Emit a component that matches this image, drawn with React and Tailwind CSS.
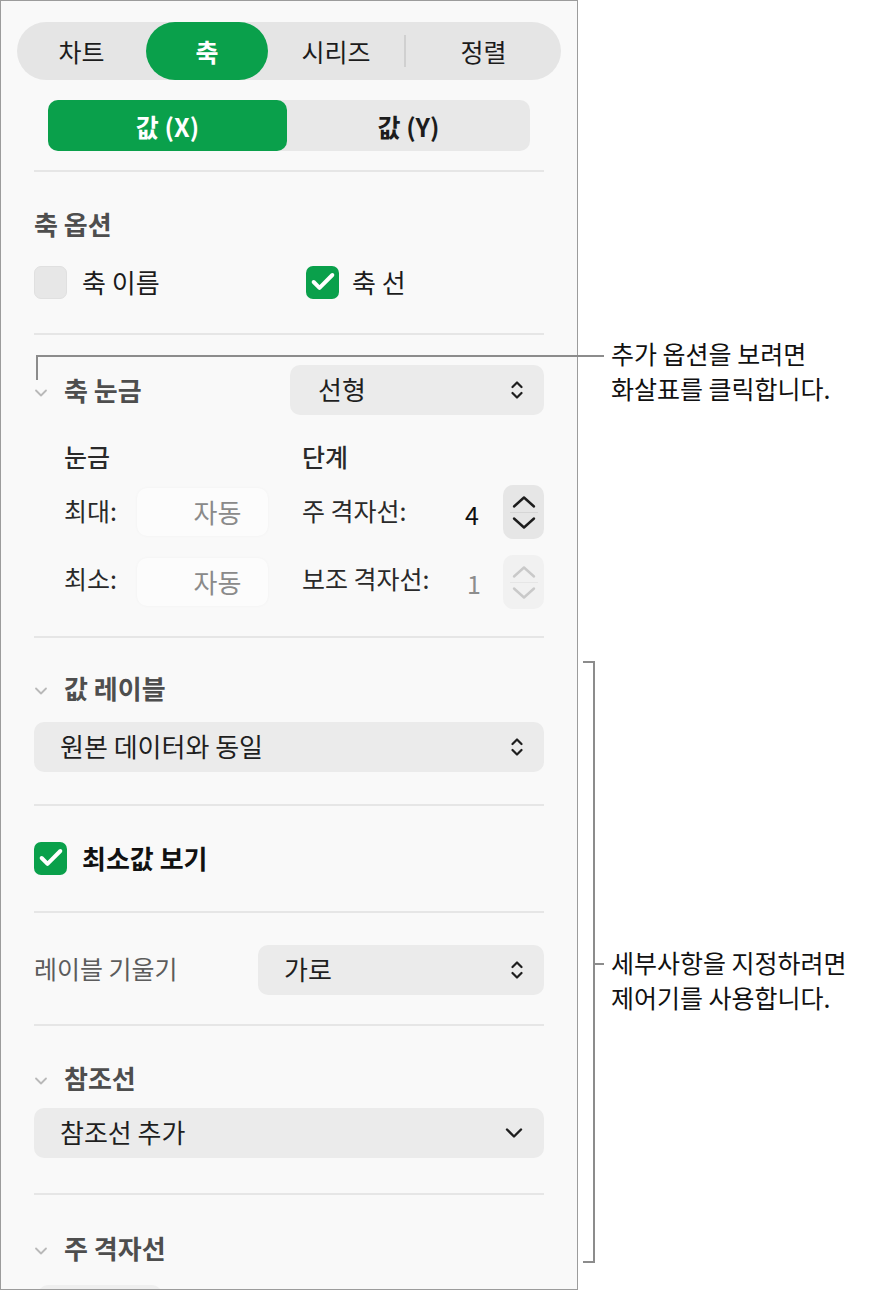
import { Check } from 'lucide-react'

const GREEN = 'bg-[#0aa04b]'

function UpDown({ className = '' }) {
  return (
    <svg width="12" height="20" viewBox="0 0 12 20" className={className} fill="none" stroke="currentColor" strokeWidth="2.2" strokeLinecap="round" strokeLinejoin="round">
      <path d="M1.5 7 L6 2.5 L10.5 7" />
      <path d="M1.5 13 L6 17.5 L10.5 13" />
    </svg>
  )
}

function Disclosure() {
  return (
    <svg width="14" height="10" viewBox="0 0 14 10" fill="none" stroke="#b9b9b9" strokeWidth="1.8" strokeLinecap="round" strokeLinejoin="round">
      <path d="M2 2.5 L7 7.5 L12 2.5" />
    </svg>
  )
}

function Select({ label, icon = 'updown', className = '' }) {
  return (
    <div className={`flex items-center justify-between h-[50px] rounded-[10px] bg-[#ebebeb] pl-[26px] pr-[21px] text-[26px] leading-[36px] text-[#1f1f1f] ${className}`}>
      <span className="pb-[2px]">{label}</span>
      {icon === 'updown' ? (
        <UpDown className="text-[#1f1f1f]" />
      ) : (
        <svg width="18" height="12" viewBox="0 0 18 12" fill="none" stroke="#1f1f1f" strokeWidth="2.4" strokeLinecap="round" strokeLinejoin="round">
          <path d="M2 2.5 L9 9.5 L16 2.5" />
        </svg>
      )}
    </div>
  )
}

function Divider() {
  return <div className="h-[2px] bg-[#e6e6e6]" />
}

function CheckBox({ checked }) {
  return checked ? (
    <div className={`w-[33px] h-[33px] shrink-0 rounded-[7px] ${GREEN} flex items-center justify-center`}>
      <Check size={28} strokeWidth={3.4} className="text-white" />
    </div>
  ) : (
    <div className="w-[33px] h-[33px] shrink-0 rounded-[7px] bg-[#e7e7e7] border border-[#e0e0e0]" />
  )
}

function SectionHead({ title }) {
  return (
    <div className="flex items-center h-[40px]">
      <div className="w-[30px] flex items-center pt-[6px]">
        <Disclosure />
      </div>
      <span className="text-[26px] leading-[36px] font-bold text-[#4e4e4e]">{title}</span>
    </div>
  )
}

function Stepper({ disabled }) {
  const c = disabled ? 'text-[#c9c9c9]' : 'text-[#1c1c1c]'
  return (
    <div className={`w-[41px] h-[54px] rounded-[10px] flex flex-col items-center justify-center ${disabled ? 'bg-[#f1f1f1]' : 'bg-[#e6e6e6]'}`}>
      <svg width="26" height="14" viewBox="0 0 26 14" fill="none" stroke="currentColor" strokeWidth="2.4" strokeLinecap="round" strokeLinejoin="round" className={c}>
        <path d="M3 11.5 L13 2.5 L23 11.5" />
      </svg>
      <div className={`w-[28px] h-[1px] my-[3px] ${disabled ? 'bg-[#e6e6e6]' : 'bg-[#d6d6d6]'}`} />
      <svg width="26" height="14" viewBox="0 0 26 14" fill="none" stroke="currentColor" strokeWidth="2.4" strokeLinecap="round" strokeLinejoin="round" className={c}>
        <path d="M3 2.5 L13 11.5 L23 2.5" />
      </svg>
    </div>
  )
}

function AutoField() {
  return (
    <div className="w-[131px] h-[48px] rounded-[10px] bg-[#fcfcfc] shadow-[0_0_3px_rgba(0,0,0,0.04)] flex items-center justify-center pl-[30px] text-[26px] text-[#8a8a8a]">
      자동
    </div>
  )
}

export default function App() {
  return (
    <div className="relative w-[870px] h-[1292px] bg-white font-['Noto_Sans_CJK_KR','Noto_Sans',sans-serif] overflow-hidden">
      {/* Inspector panel */}
      <div className="w-[578px] h-[1290px] border border-[#9c9c9c] bg-[#f9f9f9] overflow-hidden">
        {/* Top tabs */}
        <div className="mx-[16px] mt-[21px] h-[58px] rounded-full bg-[#e5e5e5] flex items-center text-[25px] leading-[36px] text-[#1c1c1c]">
          <div className="w-[129px] text-center">차트</div>
          <div className={`w-[122px] h-full rounded-full ${GREEN} text-white font-bold flex items-center justify-center`}>축</div>
          <div className="w-[136px] text-center">시리즈</div>
          <div className="w-[2px] h-[32px] bg-[#d0d0d0]" />
          <div className="flex-1 text-center">정렬</div>
        </div>

        {/* Axis switch */}
        <div className="mx-[47px] mt-[20px] h-[51px] rounded-[10px] bg-[#e8e8e8] flex items-center text-[25px] leading-[36px] font-semibold">
          <div className={`w-[239px] h-full rounded-[10px] ${GREEN} text-white flex items-center justify-center`}>값 (X)</div>
          <div className="flex-1 text-center text-[#1c1c1c]">값 (Y)</div>
        </div>

        <div className="px-[33px]">
          <div className="mt-[19px]"><Divider /></div>

          {/* Axis options */}
          <div className="mt-[34px] text-[26px] font-bold text-[#4e4e4e] leading-[36px]">축 옵션</div>
          <div className="mt-[23px] flex items-center h-[34px] text-[26px] leading-[36px] text-[#1c1c1c]">
            <div className="w-[272px] flex items-center gap-[15px]">
              <CheckBox />
              <span>축 이름</span>
            </div>
            <div className="flex items-center gap-[13px]">
              <CheckBox checked />
              <span>축 선</span>
            </div>
          </div>

          <div className="mt-[34px]"><Divider /></div>

          {/* Axis scale */}
          <div className="mt-[30px] flex items-center">
            <div className="w-[256px]"><SectionHead title="축 눈금" /></div>
            <Select label="선형" className="flex-1 pl-[28px]" />
          </div>

          <div className="mt-[26px] pl-[30px] flex text-[25px] font-medium text-[#2a2a2a] leading-[30px]">
            <div className="w-[238px]">눈금</div>
            <div>단계</div>
          </div>

          <div className="mt-[14px] pl-[30px] flex items-center text-[25px] leading-[36px] text-[#2a2a2a]">
            <div className="w-[73px] pb-[4px]">최대:</div>
            <AutoField />
            <div className="ml-[34px] flex-1 pb-[4px]">주 격자선:</div>
            <div className="w-[16px] text-[25px] text-[#111] pt-[4px]">4</div>
            <div className="ml-[22px]"><Stepper /></div>
          </div>

          <div className="mt-[16px] pl-[30px] flex items-center text-[25px] leading-[36px] text-[#2a2a2a]">
            <div className="w-[73px] pb-[8px]">최소:</div>
            <AutoField />
            <div className="ml-[34px] flex-1 pb-[8px]">보조 격자선:</div>
            <div className="w-[14px] text-[25px] text-[#8d8d8d] pt-[2px]">1</div>
            <div className="ml-[22px]"><Stepper disabled /></div>
          </div>

          <div className="mt-[27px]"><Divider /></div>

          {/* Value labels */}
          <div className="mt-[30px]"><SectionHead title="값 레이블" /></div>
          <Select label="원본 데이터와 동일" className="mt-[14px]" />

          <div className="mt-[32px]"><Divider /></div>

          <div className="mt-[35px] h-[34px] flex items-center gap-[15px]">
            <CheckBox checked />
            <span className="text-[26px] leading-[36px] font-bold text-[#111]">최소값 보기</span>
          </div>

          <div className="mt-[36px]"><Divider /></div>

          {/* Label angle */}
          <div className="mt-[32px] flex items-center">
            <div className="w-[224px] text-[25px] leading-[36px] text-[#5c5c5c] pb-[4px]">레이블 기울기</div>
            <Select label="가로" className="flex-1" />
          </div>

          <div className="mt-[29px]"><Divider /></div>

          {/* Reference lines */}
          <div className="mt-[32px]"><SectionHead title="참조선" /></div>
          <Select label="참조선 추가" icon="chevron" className="mt-[10px]" />

          <div className="mt-[35px]"><Divider /></div>

          {/* Major gridlines */}
          <div className="mt-[33px]"><SectionHead title="주 격자선" /></div>
          <div className="mt-[17px] ml-[4px] w-[124px] h-[30px] rounded-[10px] bg-[#efefef]" />
        </div>
      </div>

      {/* Callout: disclosure arrow */}
      <div className="absolute left-[36px] top-[355px] w-[568px] h-[2px] bg-[#8c8c8c]" />
      <div className="absolute left-[36px] top-[355px] w-[2px] h-[25px] bg-[#8c8c8c]" />
      <div className="absolute left-[611px] top-[336px] text-[25px] leading-[35px] text-[#111]">
        <div>추가 옵션을 보려면</div>
        <div>화살표를 클릭합니다.</div>
      </div>

      {/* Callout: bracket over the detail controls */}
      <div className="absolute left-[583px] top-[661px] w-[12px] h-[602px] border-y-2 border-r-2 border-[#8c8c8c]" />
      <div className="absolute left-[595px] top-[963px] w-[9px] h-[2px] bg-[#8c8c8c]" />
      <div className="absolute left-[611px] top-[945px] text-[25px] leading-[35px] text-[#111]">
        <div>세부사항을 지정하려면</div>
        <div>제어기를 사용합니다.</div>
      </div>
    </div>
  )
}
